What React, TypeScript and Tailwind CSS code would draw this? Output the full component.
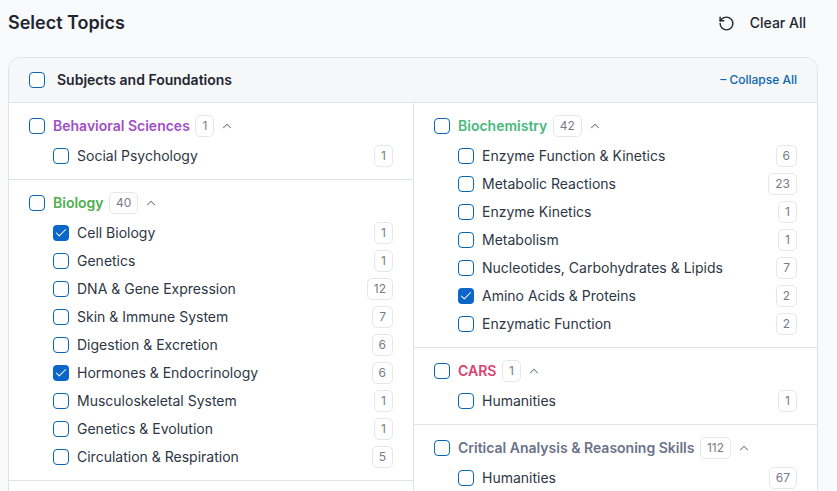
import { ChevronUp, RotateCcw, Check } from 'lucide-react';

type Topic = { name: string; count: number; checked?: boolean };
type Group = { name: string; count: number; color: string; topics: Topic[] };

const leftGroups: Group[] = [
  {
    name: 'Behavioral Sciences',
    count: 1,
    color: 'text-[#a04fc6]',
    topics: [{ name: 'Social Psychology', count: 1 }],
  },
  {
    name: 'Biology',
    count: 40,
    color: 'text-[#4caf50]',
    topics: [
      { name: 'Cell Biology', count: 1, checked: true },
      { name: 'Genetics', count: 1 },
      { name: 'DNA & Gene Expression', count: 12 },
      { name: 'Skin & Immune System', count: 7 },
      { name: 'Digestion & Excretion', count: 6 },
      { name: 'Hormones & Endocrinology', count: 6, checked: true },
      { name: 'Musculoskeletal System', count: 1 },
      { name: 'Genetics & Evolution', count: 1 },
      { name: 'Circulation & Respiration', count: 5 },
    ],
  },
];

const rightGroups: Group[] = [
  {
    name: 'Biochemistry',
    count: 42,
    color: 'text-[#48b97c]',
    topics: [
      { name: 'Enzyme Function & Kinetics', count: 6 },
      { name: 'Metabolic Reactions', count: 23 },
      { name: 'Enzyme Kinetics', count: 1 },
      { name: 'Metabolism', count: 1 },
      { name: 'Nucleotides, Carbohydrates & Lipids', count: 7 },
      { name: 'Amino Acids & Proteins', count: 2, checked: true },
      { name: 'Enzymatic Function', count: 2 },
    ],
  },
  {
    name: 'CARS',
    count: 1,
    color: 'text-[#d9426f]',
    topics: [{ name: 'Humanities', count: 1 }],
  },
  {
    name: 'Critical Analysis & Reasoning Skills',
    count: 112,
    color: 'text-[#6b7288]',
    topics: [{ name: 'Humanities', count: 67 }],
  },
];

const Box = ({ checked }: { checked?: boolean }) =>
  checked ? (
    <span className="flex h-4 w-4 shrink-0 items-center justify-center rounded-[4px] bg-[#0a66c9]">
      <Check className="h-3.5 w-3.5 text-white" strokeWidth={1.75} />
    </span>
  ) : (
    <span className="h-4 w-4 shrink-0 rounded-[4px] border border-[#0a66b0] bg-white" />
  );

const Count = ({ value }: { value: number }) => (
  <span className="flex h-[22px] min-w-[19px] items-center justify-center rounded-[5px] border border-[#e5e7eb] bg-white px-[6px] text-xs text-[#767c87]">
    {value}
  </span>
);

const TopicGroup = ({ group }: { group: Group }) => (
  <div className="flex flex-col gap-2 border-b border-[#dfe3e8] px-5 pt-3 pb-3">
    <div className="flex h-[22px] items-center">
      <Box />
      <span className={`ml-2 text-sm font-semibold ${group.color}`}>{group.name}</span>
      <span className="ml-[5.5px]">
        <Count value={group.count} />
      </span>
      <ChevronUp className="ml-[6px] h-3.5 w-3.5 text-[#6b7280]" strokeWidth={1.75} />
    </div>
    <div className="flex flex-col gap-[6px] pl-6">
      {group.topics.map(t => (
        <div key={t.name} className="flex h-[22px] items-center">
          <Box checked={t.checked} />
          <span className="ml-2 flex-1 text-sm text-[#2e3644]">{t.name}</span>
          <Count value={t.count} />
        </div>
      ))}
    </div>
  </div>
);

const App = () => {
  return (
    <div className="h-[491px] overflow-hidden bg-[#f9fafc] pl-2 pr-[19px] font-['Inter',sans-serif]">
      <div className="flex h-[57px] items-start justify-between pt-[11px]">
        <h1 className="text-lg leading-6 font-semibold text-[#1f2630]">Select Topics</h1>
        <button className="mr-3 flex h-6 items-center gap-[15px] text-sm font-medium text-[#1f2630]">
          <RotateCcw className="h-[17px] w-[17px]" strokeWidth={2} />
          Clear All
        </button>
      </div>
      <div className="overflow-hidden rounded-t-xl border border-[#dfe3e8] bg-white">
        <div className="flex h-[45px] items-center justify-between border-b border-[#dfe3e8] bg-[#f6f7f9] pr-5 pl-5">
          <div className="flex items-center gap-3">
            <Box />
            <span className="text-sm font-semibold text-[#1f2630]">Subjects and Foundations</span>
          </div>
          <button className="text-xs font-medium text-[#0a66b0]">– Collapse All</button>
        </div>
        <div className="flex">
          <div className="w-[405px] border-r border-[#dfe3e8]">
            {leftGroups.map(g => (
              <TopicGroup key={g.name} group={g} />
            ))}
          </div>
          <div className="flex-1">
            {rightGroups.map(g => (
              <TopicGroup key={g.name} group={g} />
            ))}
          </div>
        </div>
      </div>
    </div>
  );
};

export default App;
